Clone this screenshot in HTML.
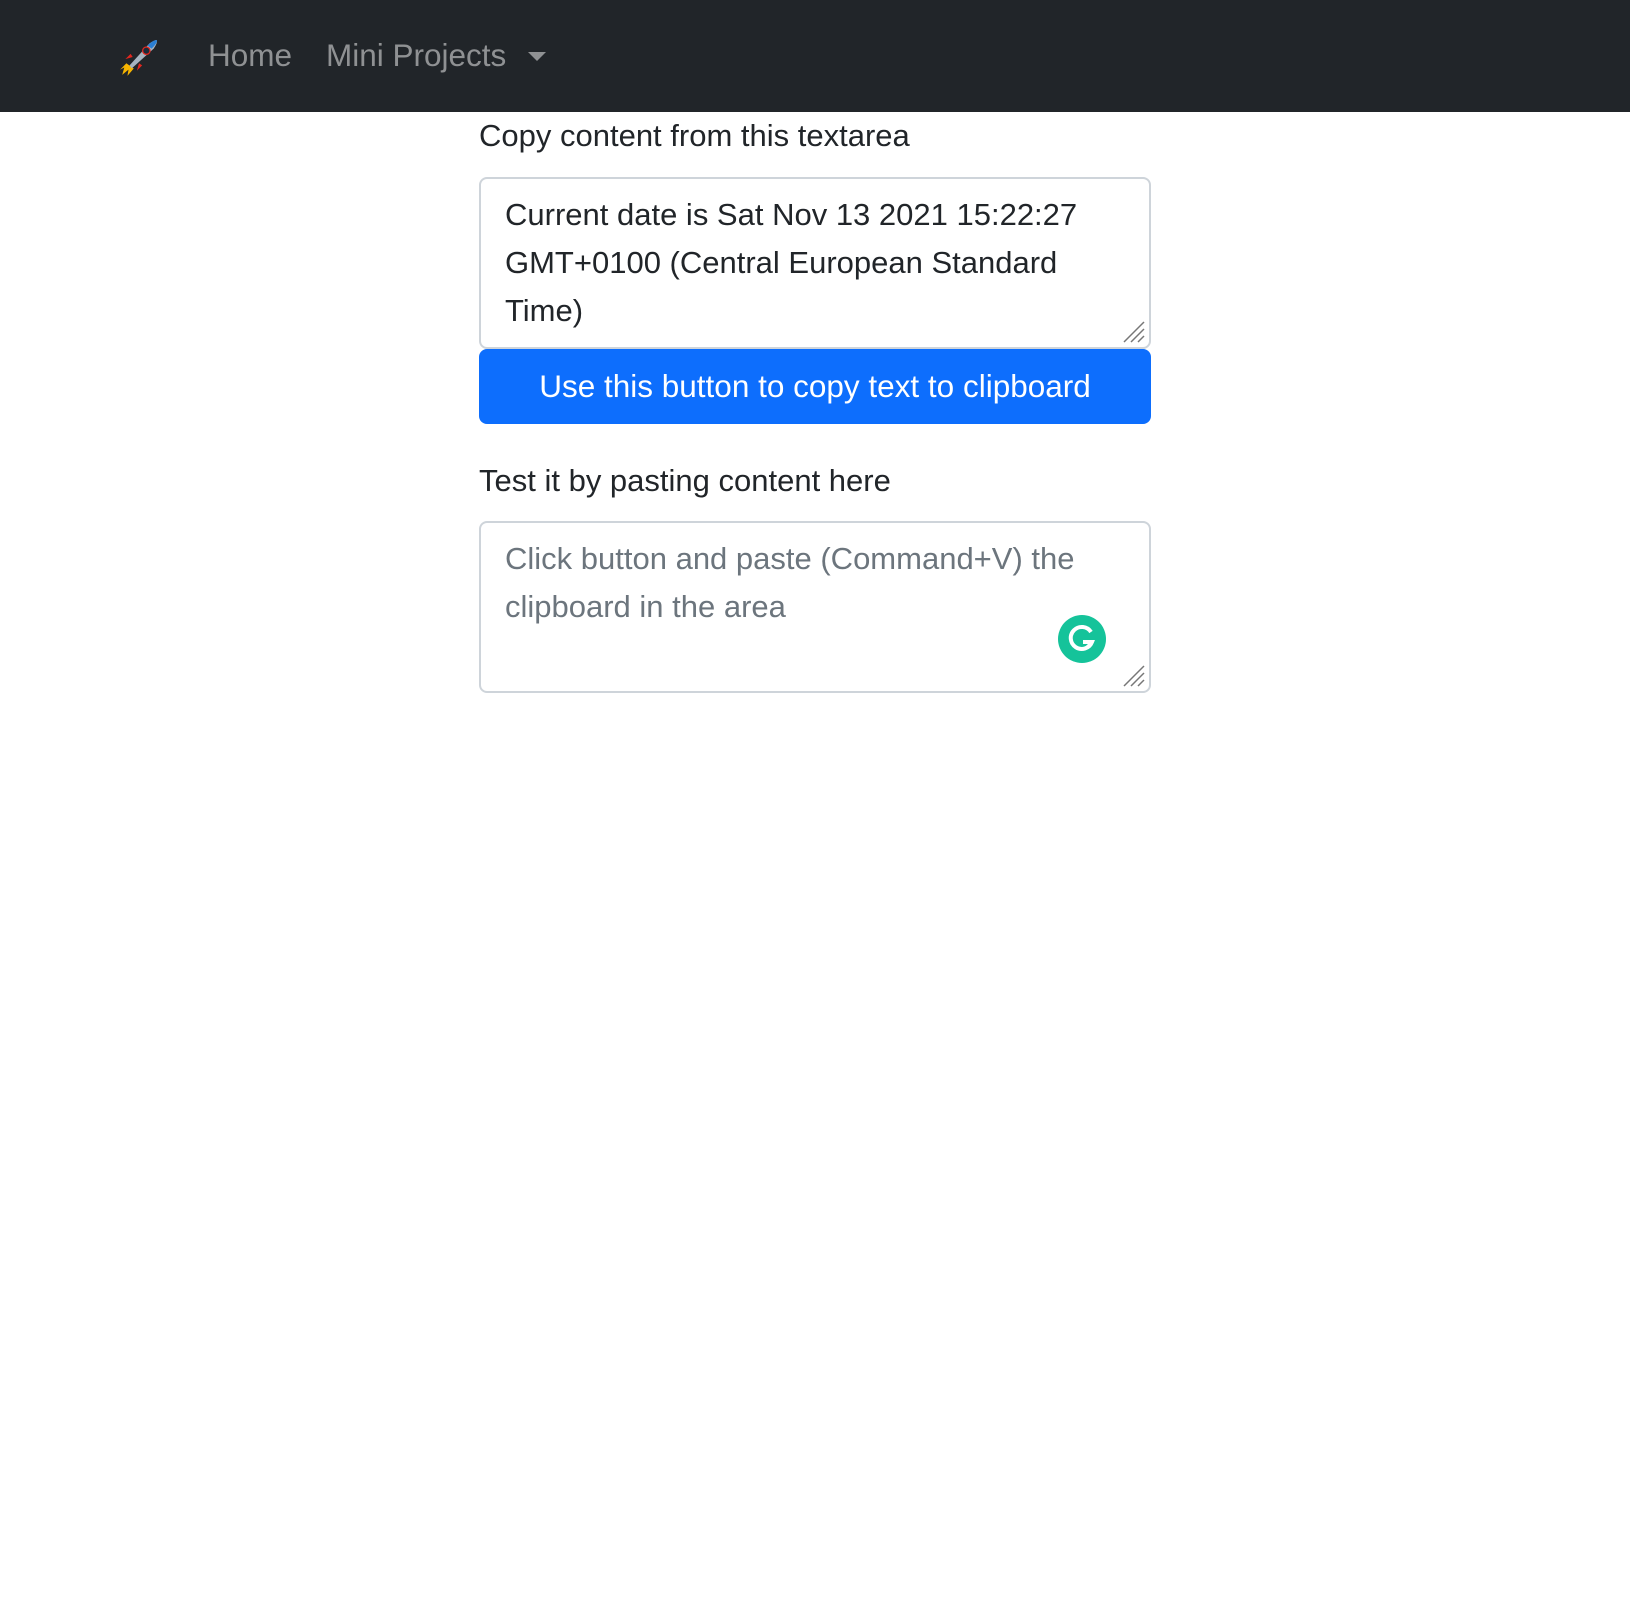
<!DOCTYPE html>
<html><head><meta charset="utf-8"><style>
*{box-sizing:border-box;margin:0;padding:0}
body{width:1630px;height:1606px;background:#fff;font-family:"Liberation Sans",sans-serif;color:#212529;overflow:hidden}
.nav{height:112px;background:#212529;position:relative}
.nav .l{position:absolute;top:37px;font-size:31.5px;color:#8f9193;white-space:nowrap}
.caret{position:absolute;left:528px;top:52px;width:0;height:0;border-left:9px solid transparent;border-right:9px solid transparent;border-top:9px solid #8f9193}
.c{position:absolute;left:479px;width:672px}
.lbl{font-size:31px;line-height:48px;white-space:nowrap}
.ta{border:2px solid #ced4da;border-radius:8px;padding:12px 24px;font-size:31px;line-height:48px;white-space:nowrap;position:absolute;left:0;width:672px;height:172px}
.btn{position:absolute;left:0;width:672px;height:75px;background:#0d6efd;border-radius:8px;color:#fff;font-size:31.5px;text-align:center;line-height:75px}
.grip{position:absolute;right:3px;bottom:3px;width:24px;height:24px}
</style></head><body>
<div class="nav">
<svg style="position:absolute;left:118px;top:36px" width="42" height="42" viewBox="0 0 40 40">
<path d="M8 26 L2 32 L6 30 L4 37 L10 32 L9 38 L15 31Z" fill="#f7b500"/>
<path d="M7 22 L12 17 L14 20Z M18 33 L23 28 L20 26Z" fill="#e3261e"/>
<path d="M11 28 L30 7 Q36 3 37 4 Q38 6 34 12 L13 31Z" fill="#a7b4c0"/>
<path d="M28 9 Q35 3 37 4 Q38 6 32 12Z" fill="#2a7fd4"/>
<circle cx="27" cy="14" r="3.5" fill="#1b2b3a" stroke="#e3261e" stroke-width="1.2"/>
</svg>
<div class="l" style="left:208px">Home</div>
<div class="l" style="left:326px">Mini Projects</div>
<div class="caret"></div>
</div>
<div class="c" style="top:112px">
<div class="lbl">Copy content from this textarea</div>
<div class="ta" style="top:65px">Current date is Sat Nov 13 2021 15:22:27<br>GMT+0100 (Central European Standard<br>Time)
<svg class="grip" viewBox="0 0 24 24"><path d="M2 22L22 2M9 22L22 9M16 22L22 16" stroke="#777" stroke-width="1.5"/></svg></div>
<div class="btn" style="top:237px">Use this button to copy text to clipboard</div>
<div class="lbl" style="position:absolute;top:345px">Test it by pasting content here</div>
<div class="ta" style="top:409px;color:#6c757d">Click button and paste (Command+V) the<br>clipboard in the area
<svg class="grip" viewBox="0 0 24 24"><path d="M2 22L22 2M9 22L22 9M16 22L22 16" stroke="#777" stroke-width="1.5"/></svg>
<svg style="position:absolute;left:577px;top:92px" width="48" height="48" viewBox="0 0 48 48"><circle cx="24" cy="24" r="24" fill="#15c39a"/><path d="M33 17 A11 11 0 1 0 34 27 L25 27" stroke="#fff" stroke-width="4" fill="none"/><path d="M28 33 L33 28" stroke="#fff" stroke-width="3"/></svg>
</div>
</div>
</body></html>
